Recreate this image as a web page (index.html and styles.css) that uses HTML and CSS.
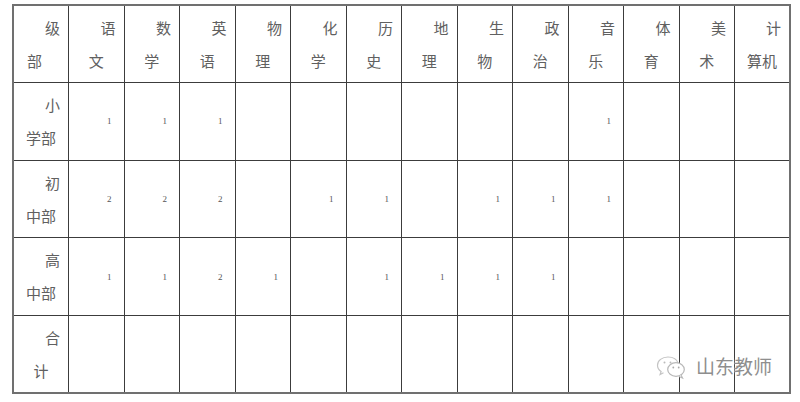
FILE: index.html
```html
<!DOCTYPE html>
<html lang="zh">
<head>
<meta charset="utf-8">
<link rel="stylesheet" href="styles.css">
</head>
<body>
<div class="page">
<table class="grid">
<colgroup>
<col><col><col><col><col><col><col><col><col><col><col><col><col><col>
</colgroup>
<tr class="row">
<td class="lab"><span class="l1">级</span><span class="l2 left">部</span></td>
<td class="lab"><span class="l1">语</span><span class="l2">文</span></td>
<td class="lab"><span class="l1">数</span><span class="l2">学</span></td>
<td class="lab"><span class="l1">英</span><span class="l2">语</span></td>
<td class="lab"><span class="l1">物</span><span class="l2">理</span></td>
<td class="lab"><span class="l1">化</span><span class="l2">学</span></td>
<td class="lab"><span class="l1">历</span><span class="l2">史</span></td>
<td class="lab"><span class="l1">地</span><span class="l2">理</span></td>
<td class="lab"><span class="l1">生</span><span class="l2">物</span></td>
<td class="lab"><span class="l1">政</span><span class="l2">治</span></td>
<td class="lab"><span class="l1">音</span><span class="l2">乐</span></td>
<td class="lab"><span class="l1">体</span><span class="l2">育</span></td>
<td class="lab"><span class="l1">美</span><span class="l2">术</span></td>
<td class="lab"><span class="l1">计</span><span class="l2">算机</span></td>
</tr>
<tr class="row">
<td class="lab"><span class="l1">小</span><span class="l2">学部</span></td>
<td class="num">1</td><td class="num">1</td><td class="num">1</td>
<td></td><td></td><td></td><td></td><td></td><td></td>
<td class="num">1</td><td></td><td></td><td></td>
</tr>
<tr class="row">
<td class="lab"><span class="l1">初</span><span class="l2">中部</span></td>
<td class="num">2</td><td class="num">2</td><td class="num">2</td>
<td></td><td class="num">1</td><td class="num">1</td><td></td><td class="num">1</td><td class="num">1</td>
<td class="num">1</td><td></td><td></td><td></td>
</tr>
<tr class="row">
<td class="lab"><span class="l1">高</span><span class="l2">中部</span></td>
<td class="num">1</td><td class="num">1</td><td class="num">2</td>
<td class="num">1</td><td></td><td class="num">1</td><td class="num">1</td><td class="num">1</td><td class="num">1</td>
<td></td><td></td><td></td><td></td>
</tr>
<tr class="row">
<td class="lab"><span class="l1">合</span><span class="l2">计</span></td>
<td></td><td></td><td></td><td></td><td></td><td></td><td></td><td></td><td></td>
<td></td><td></td><td></td><td></td>
</tr>
</table>
<div class="mark">
<svg class="mark-icon" width="32" height="28" viewBox="0 0 32 28">
<path d="M13 5c-6 0-10.5 3.6-10.5 8.2 0 2.6 1.4 4.8 3.6 6.3l-1 3 3.4-1.7" fill="none" stroke="#c4c4c4" stroke-width="1.2"/>
<path d="M13 5c5 0 9 2.6 10.2 6.2" fill="none" stroke="#c4c4c4" stroke-width="1.2"/>
<circle cx="9.5" cy="10.5" r="1" fill="#bbb"/>
<circle cx="15.5" cy="10.5" r="1" fill="#bbb"/>
<ellipse cx="21" cy="17.5" rx="8.3" ry="6.8" fill="#fff" stroke="#b8b8b8" stroke-width="1.2"/>
<path d="M26 23l1.6 3-3.6-1.6" fill="#fff" stroke="#b8b8b8" stroke-width="1.1"/>
<circle cx="18.3" cy="15.5" r="0.9" fill="#aaa"/>
<circle cx="23.7" cy="15.5" r="0.9" fill="#aaa"/>
</svg>
<span class="mark-text">山东教师</span>
</div>
</div>
</body>
</html>
```
FILE: styles.css
```css
html, body {
  margin: 0;
  padding: 0;
  background: #ffffff;
}
.page {
  position: relative;
  width: 800px;
  height: 402px;
  padding: 4px 0 0 12px;
  box-sizing: border-box;
  overflow: hidden;
}
.grid {
  border-collapse: collapse;
  table-layout: fixed;
  width: 777px;
  border: 2px solid #707070;
  font-family: "Noto Sans CJK SC", "Noto Sans CJK JP", sans-serif;
  color: #606060;
}
.grid col {
  width: 55.5px;
}
.grid .row {
  height: 77.6px;
}
.grid td {
  border: 1px solid #3c3c3c;
  padding: 0;
}
.grid td.lab {
  vertical-align: top;
  padding-top: 5px;
  font-size: 15px;
  line-height: 33px;
}
.l1 {
  display: block;
  text-align: right;
  padding-right: 8px;
}
.l2 {
  display: block;
  text-align: center;
}
.l2.left {
  text-align: left;
  padding-left: 13px;
}
.grid td.num {
  vertical-align: middle;
  text-align: right;
  padding-right: 12px;
  font-family: "Liberation Serif", serif;
  font-size: 9px;
  color: #555;
}
.mark {
  position: absolute;
  left: 655px;
  top: 352px;
  display: flex;
  align-items: center;
  gap: 9px;
}
.mark-icon {
  display: block;
}
.mark-text {
  font-family: "Noto Sans CJK SC", sans-serif;
  font-size: 19px;
  line-height: 28px;
  color: #8e8e8e;
  text-shadow: 0 0 2px #fff, 0 0 2px #fff;
}
```
